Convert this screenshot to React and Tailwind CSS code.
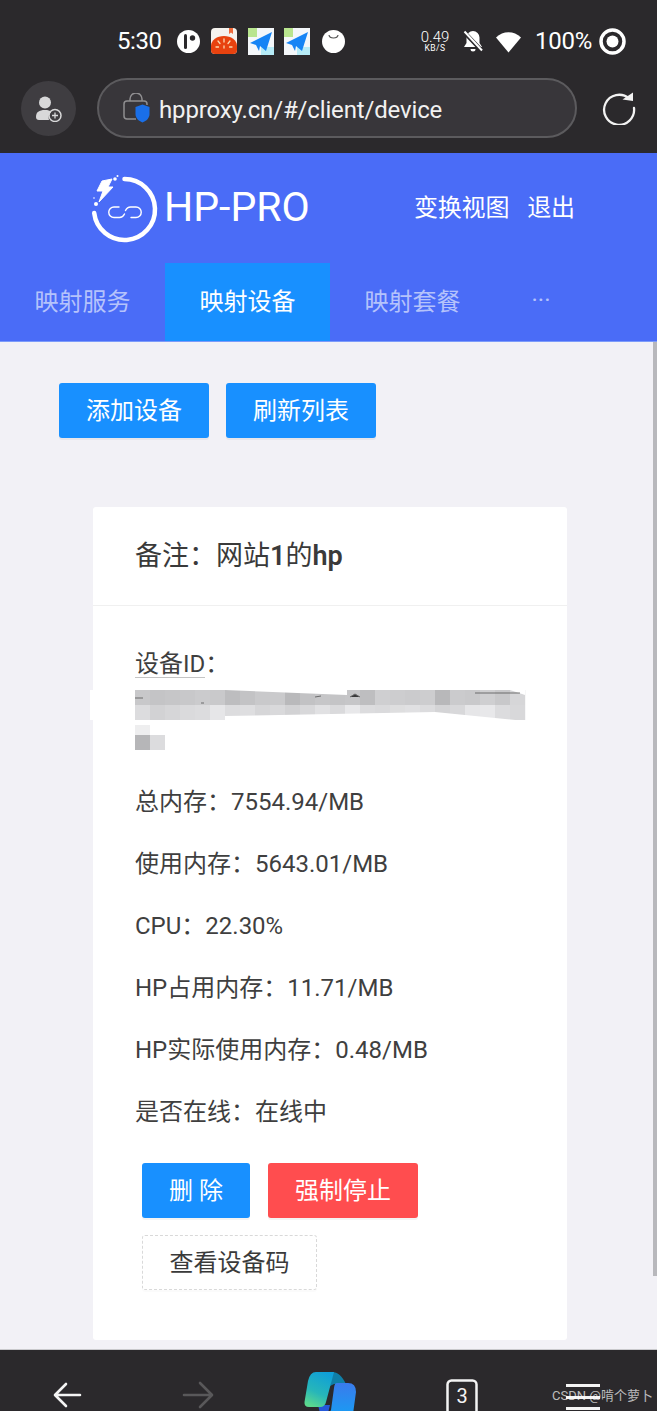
import React from 'react';

const row1 = ['#c8c8ca','#c4c4c6','#c6c6c8','#c8c8ca','#cbcbcd','#c9c9cb','#bdbdbf','#c3c3c5','#c9c9cb','#cacacc','#b9b9bb','#c2c2c4','#c6c6c8','#c4c4c6','#c6c6c8','#bebec0','#cfcfd1','#cdcdcf','#cbcbcd','#cdcdcf','#b8b8ba','#cbcbcd','#c9c9cb','#cfcfd1','#c8c8ca','#d6d6d8'];
const row2 = ['#dcdcde','#d2d2d4','#d6d6d8','#dadadc','#dcdcde','#e6e6e8','#dcdcde','#dedee0','#d6d6d8','#d9d9db','#d2d2d4','#d8d8da','#e1e1e3','#dadadc','#e8e8ea','#dcdcde','#dadadc','#dededf','#e0e0e2','#dcdcde','#d4d4d6','#d8d8da','#e6e6e8','#e8e8ea','#dcdcde','#d8d8da'];

function Mosaic() {
  return (
    <svg className="block ml-[-45px] overflow-visible" width="435" height="60" viewBox="-45 0 435 60">
      <rect x="-45" y="0" width="15" height="30" fill="#ffffff" />
      {row1.map((c, i) => <rect key={i} x={i * 15} y="0" width="15.2" height="15" fill={c} />)}
      {row2.map((c, i) => <rect key={i} x={i * 15} y="15" width="15.2" height="15" fill={c} />)}
      <polygon points="90,0 212,5 212,0" fill="#ffffff" />
      <polygon points="375,0 390,5 390,0" fill="#ffffff" />
      <polygon points="90,31 90,26 300,22 390,31" fill="#ffffff" />
      <path d="M0 8h8M66 13h3M180 7l6-1M215 7l5-3 5 3M340 3h45" stroke="#444" strokeWidth="1" opacity="0.7" />
      <rect x="0" y="35" width="15" height="10" fill="#eeeeef" />
      <rect x="0" y="45" width="15" height="15" fill="#b6b6b8" />
      <rect x="15" y="45" width="15" height="15" fill="#dcdcde" />
    </svg>
  );
}

function Logo() {
  return (
    <svg width="70" height="72" viewBox="0 0 70 72" fill="none" className="mt-[4px] shrink-0">
      <path d="M34.500 5A30.500 30.500 0 1 1 4.200 39" stroke="#fff" strokeWidth="4.500" strokeLinecap="round" />
      <path d="M12 7 L22 5 L18 13 L23 13 L9 28 L13 17 L7 17 Z" fill="#fff" stroke="#fff" strokeWidth="1" strokeLinejoin="round" />
      <circle cx="25" cy="5" r="1.800" fill="#fff" />
      <circle cx="27.500" cy="2" r="1" fill="#fff" />
      <circle cx="6" cy="30" r="2" fill="#fff" />
      <circle cx="4" cy="24" r="0.800" fill="#fff" />
      <path d="M29 33h-5a5.200 5.200 0 0 0 0 10.500h5.500c2.500 0 4-1.500 5-3.500" stroke="#fff" strokeWidth="1.400" strokeLinecap="round" />
      <path d="M41 43.500h5a5.200 5.200 0 0 0 0-10.500h-5.500c-2.500 0-4 1.500-5 3.500" stroke="#fff" strokeWidth="1.400" strokeLinecap="round" />
    </svg>
  );
}

function PlaneApp() {
  return (
    <svg width="26" height="27" viewBox="0 0 26 27" className="shrink-0">
      <rect width="26" height="27" fill="#f4f7fa" />
      <rect width="9" height="9" fill="#b9e58f" />
      <rect y="19" x="13" width="13" height="8" fill="#b6ebf7" />
      <path d="M2 15 L24 4 L18 23 L12 18 L11 23 L8 17 Z" fill="#1684f5" />
    </svg>
  );
}

function StatusBar() {
  return (
    <div className="h-[78px] pt-1 pl-[117px] flex items-center text-white">
      <span className="text-[24px] w-[45px] font-normal tracking-[-0.4px]">5:30</span>
      <svg width="23" height="23" viewBox="0 0 23 23" className="ml-[15px] shrink-0">
        <circle cx="11.500" cy="11.500" r="11.500" fill="#fff" />
        <path d="M8.500 5.500v12" stroke="#2b292c" strokeWidth="3" strokeLinecap="round" />
        <circle cx="15.500" cy="8" r="2.700" fill="#2b292c" />
      </svg>
      <svg width="26" height="26" viewBox="0 0 26 26" className="ml-[11px] shrink-0">
        <rect width="26" height="26" rx="4" fill="#f5f2ee" />
        <path d="M18 0h4v6l-2-1.500L18 6z" fill="#ef6a3a" />
        <path d="M0 22V18C0 12 6 8 13 8s13 4 13 10v4a4 4 0 0 1-4 4H4a4 4 0 0 1-4-4z" fill="#e8420f" />
        <path d="M13 11v3M7 13l2 2.500M19 13l-2 2.500M5 19h2.500M18.500 19H21M13 18v2" stroke="#fbd9b0" strokeWidth="1.300" strokeLinecap="round" />
      </svg>
      <div className="ml-[11px]"><PlaneApp /></div>
      <div className="ml-[10px]"><PlaneApp /></div>
      <svg width="23" height="23" viewBox="0 0 23 23" className="ml-[12px] shrink-0">
        <circle cx="11.500" cy="11.500" r="11.500" fill="#fff" />
        <path d="M7 5c.5 4 8.500 4 9 0" stroke="#555" strokeWidth="1.200" fill="none" />
      </svg>
      <div className="ml-[75px] w-[30px] flex flex-col items-center leading-none">
        <span className="text-[15px] leading-[14px] font-light">0.49</span>
        <span className="text-[8.500px] leading-[9px] tracking-[0.5px]">KB/S</span>
      </div>
      <svg width="22" height="24" viewBox="0 0 22 24" className="ml-[12px] shrink-0">
        <path d="M11 2a6.500 6.500 0 0 0-6.500 6.500V14L2 18h18l-2.500-4V8.500A6.500 6.500 0 0 0 11 2z" fill="#fff" />
        <path d="M8.500 20h5a2.500 2.500 0 0 1-5 0z" fill="#fff" />
        <path d="M2 3l18 19" stroke="#2b292c" strokeWidth="4" />
        <path d="M2.500 2.500l17.500 19" stroke="#fff" strokeWidth="2" />
      </svg>
      <svg width="27" height="23" viewBox="0 0 27 23" className="ml-[11px] shrink-0">
        <path d="M1 7.500C8 .5 19 .5 26 7.500L13.500 22.500z" fill="#fff" />
      </svg>
      <span className="ml-[13px] text-[24px] w-[57px] tracking-[-0.2px]">100%</span>
      <svg width="27" height="27" viewBox="0 0 27 27" className="ml-[7px] shrink-0">
        <circle cx="13.500" cy="13.500" r="11.500" fill="none" stroke="#fff" strokeWidth="3.500" />
        <circle cx="13.500" cy="13.500" r="6" fill="#fff" />
      </svg>
    </div>
  );
}

function AddressBar() {
  return (
    <div className="h-[75px] pl-[21px] flex items-start">
      <div className="w-[55px] h-[55px] mt-[3px] rounded-full bg-[#3f3d41] flex items-center justify-center">
        <svg width="28" height="26" viewBox="0 0 28 26">
          <circle cx="10" cy="6.500" r="6" fill="#d8d8d9" />
          <path d="M1 21c0-5 3-7 9-7 3 0 5 .5 6 2a8 8 0 0 0-2 8H4c-2 0-3-1-3-3z" fill="#d8d8d9" />
          <circle cx="20" cy="19.500" r="6" fill="none" stroke="#d8d8d9" strokeWidth="1.500" />
          <path d="M20 16.500v6M17 19.500h6" stroke="#d8d8d9" strokeWidth="1.300" />
        </svg>
      </div>
      <div className="ml-[21px] w-[480px] h-[60px] rounded-full bg-[#38363a] border-2 border-[#5c5b5e] flex items-center pl-[24px]">
        <svg width="28" height="30" viewBox="0 0 28 30" className="shrink-0">
          <path d="M7 8V6a6 6 0 0 1 12 0v2" fill="none" stroke="#8f8e90" strokeWidth="1.500" />
          <path d="M13 26H4a3 3 0 0 1-3-3V11a3 3 0 0 1 3-3h17a3 3 0 0 1 3 3v1" fill="none" stroke="#8f8e90" strokeWidth="1.500" />
          <path d="M19.500 11.500l7 2.500v7c0 4-3 7-7 8.500-4-1.500-7-4.500-7-8.500v-7z" fill="#1a6fe8" />
        </svg>
        <span className="ml-[8px] mt-[3px] text-[24px] tracking-[-0.15px] text-[#f1f1f1]">hpproxy.cn/#/client/device</span>
      </div>
      <svg width="34" height="34" viewBox="0 0 34 34" className="ml-[25px] mt-[13px] shrink-0" fill="none">
        <path d="M27 7.500A15 15 0 1 0 32 17" stroke="#f2f2f2" strokeWidth="2.300" strokeLinecap="round" />
        <path d="M20.500 8.500L31 10V1.500z" fill="#f2f2f2" />
      </svg>
    </div>
  );
}

function Header() {
  return (
    <div className="bg-[#4a6cf7] h-[189px] shrink-0 border-b border-[#7c9bfa]">
      <div className="h-[110px] flex items-center pl-[90px]">
        <Logo />
        <span className="ml-[4px] w-[146px] text-[41px] text-white font-normal whitespace-nowrap">HP-PRO</span>
        <span className="ml-[104px] text-[24px] text-white tracking-[-0.2px]">变换视图</span>
        <span className="ml-[18px] text-[24px] text-white tracking-[-0.2px]">退出</span>
      </div>
      <div className="h-[78px] flex text-[24px] text-white/60">
        <div className="w-[165px] flex items-center justify-center">映射服务</div>
        <div className="w-[165px] flex items-center justify-center bg-[#1890ff] text-white">映射设备</div>
        <div className="w-[165px] flex items-center justify-center">映射套餐</div>
        <div className="w-[92px] flex items-center justify-center pb-1">···</div>
      </div>
    </div>
  );
}

function Info({ children }) {
  return <p className="h-[30px] leading-[30px] mb-[32px]">{children}</p>;
}

function BottomNav() {
  return (
    <div className="relative h-[62px] bg-[#2b292c] border-t border-[#c9c9cc] shrink-0 overflow-hidden flex items-start">
      <svg width="30" height="28" viewBox="0 0 30 28" className="ml-[52px] mt-[31px] shrink-0" fill="none">
        <path d="M28 14H4M14 3L3 14l11 11" stroke="#f4f4f4" strokeWidth="2.600" strokeLinecap="round" strokeLinejoin="round" />
      </svg>
      <svg width="32" height="28" viewBox="0 0 32 28" className="ml-[100px] mt-[31px] shrink-0" fill="none">
        <path d="M2 14h27M18 2l12 12-12 12" stroke="#59585a" strokeWidth="2.600" strokeLinecap="round" strokeLinejoin="round" />
      </svg>
      <svg width="54" height="52" viewBox="0 0 54 52" className="ml-[90px] mt-[22px] shrink-0">
        <defs>
          <linearGradient id="cpA" x1="0.700" y1="0" x2="0.300" y2="1">
            <stop offset="0" stopColor="#0f9fd8" />
            <stop offset="0.600" stopColor="#27b6b9" />
            <stop offset="1" stopColor="#5bd88e" />
          </linearGradient>
          <linearGradient id="cpB" x1="0.500" y1="0" x2="0.500" y2="1">
            <stop offset="0" stopColor="#3a7bec" />
            <stop offset="1" stopColor="#10a5f5" />
          </linearGradient>
        </defs>
        <path d="M28 0c6 0 10 4 14 12H30l-4 2 2-14z" fill="#0f7fa8" />
        <path d="M14 33h12l-2 8h-8z" fill="#2458d8" />
        <path d="M12 0h18L22 30q-1 5-6 5H5q-5 0-4.500-5L4 9Q6 0 12 0z" fill="url(#cpA)" />
        <path d="M33 11h11q8 0 8 9l-3 22q-1 10-10 10H18l9-14 3-22q.5-5 3-5z" fill="url(#cpB)" />
      </svg>
      <svg width="32" height="38" viewBox="0 0 32 38" className="ml-[88px] mt-[29px] shrink-0" fill="none">
        <rect x="1.500" y="1.500" width="29" height="35" rx="4" stroke="#f4f4f4" strokeWidth="2.500" />
      </svg>
      <span className="absolute left-[446px] top-[33px] w-[32px] text-center text-[20px] leading-[26px] text-[#f4f4f4]">3</span>
      <div className="ml-[88px] mt-[34px] w-[34px] flex flex-col gap-[8.500px] shrink-0">
        <div className="h-[3px] bg-[#f4f4f4]" />
        <div className="h-[3px] bg-[#f4f4f4]" />
        <div className="h-[3px] bg-[#f4f4f4]" />
      </div>
      <span className="absolute left-[552px] top-[38px] text-[13px] leading-[16px] text-white/70 whitespace-nowrap">CSDN @啃个萝卜</span>
    </div>
  );
}

export default function App() {
  return (
    <div className="w-[657px] h-[1411px] overflow-hidden flex flex-col bg-[#f2f1f6] font-['Roboto','Noto_Sans_CJK_SC',sans-serif]">
      <div className="bg-[#2b292c] h-[153px] shrink-0">
        <StatusBar />
        <AddressBar />
      </div>
      <Header />
      <div className="relative flex-1 min-h-0 pt-[41px] overflow-hidden">
        <div className="absolute right-0 top-0 w-[4px] h-[934px] bg-[#b8b8bc]" />
        <div className="pl-[59px] flex gap-[17px]">
          <button className="w-[150px] h-[55px] rounded-[3px] bg-[#1890ff] text-white text-[24px] shadow-[0_2px_0_rgba(0,0,0,0.045)]">添加设备</button>
          <button className="w-[150px] h-[55px] rounded-[3px] bg-[#1890ff] text-white text-[24px] shadow-[0_2px_0_rgba(0,0,0,0.045)]">刷新列表</button>
        </div>
        <div className="ml-[93px] mt-[69px] w-[474px] h-[833px] bg-white rounded-[3px]">
          <div className="h-[99px] border-b border-[#f0f0f0] px-[42px] flex items-center text-[27px] text-[#3a3a3a]">
            <span>备注：网站<b className="font-semibold">1</b>的<b className="font-semibold">hp</b></span>
          </div>
          <div className="pl-[42px] pt-[43px] text-[24px] text-[#3f3f3f]">
            <p className="h-[30px] leading-[30px]"><span className="inline-block leading-[25px] border-b border-[#c4c4c4]">设备ID</span>：</p>
            <div className="mt-[11px] mb-[37px]"><Mosaic /></div>
            <Info>总内存：7554.94/MB</Info>
            <Info>使用内存：5643.01/MB</Info>
            <Info>CPU：22.30%</Info>
            <Info>HP占用内存：11.71/MB</Info>
            <Info>HP实际使用内存：0.48/MB</Info>
            <Info>是否在线：在线中</Info>
          </div>
          <div className="pl-[49px] mt-[36px] flex gap-[18px]">
            <button className="w-[108px] h-[55px] rounded-[3px] bg-[#1890ff] text-white text-[24px] shadow-[0_2px_0_rgba(0,0,0,0.045)]">删 除</button>
            <button className="w-[150px] h-[55px] rounded-[3px] bg-[#ff4d4f] text-white text-[24px] shadow-[0_2px_0_rgba(0,0,0,0.045)]">强制停止</button>
          </div>
          <div className="pl-[49px] mt-[17px]">
            <button className="w-[175px] h-[55px] rounded-[3px] bg-white border border-dashed border-[#d9d9d9] text-[#3a3a3a] text-[24px] shadow-[0_2px_0_rgba(0,0,0,0.015)]">查看设备码</button>
          </div>
        </div>
      </div>
      <BottomNav />
    </div>
  );
}
